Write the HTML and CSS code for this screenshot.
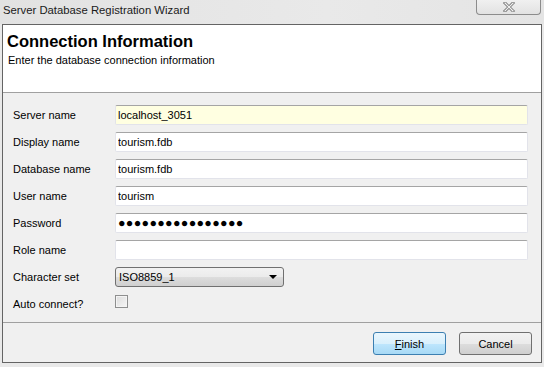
FILE: index.html
```html
<!DOCTYPE html>
<html lang="en">
<head>
  <meta charset="UTF-8" />
  <title>Server Database Registration Wizard</title>
  <link rel="stylesheet" href="styles.css">
</head>
<body>
  <div class="window">
    <div class="titlebar">
      <span class="title">Server Database Registration Wizard</span>
      <div class="close-btn">
        <svg width="14" height="10" viewBox="0 0 14 10">
          <path d="M3 1 L11 9 M11 1 L3 9" stroke="#7a7a7a" stroke-width="3" stroke-linecap="square" fill="none"/>
          <path d="M3 1 L11 9 M11 1 L3 9" stroke="#f4f4f4" stroke-width="1.2" stroke-linecap="square" fill="none"/>
        </svg>
      </div>
    </div>

    <div class="frame">
      <!-- Page header -->
      <div class="header">
        <h1>Connection Information</h1>
        <p>Enter the database connection information</p>
      </div>

      <!-- Connection fields -->
      <div class="form">
        <label class="lbl">Server name</label>
        <input class="field highlight" type="text" value="localhost_3051" />

        <label class="lbl">Display name</label>
        <input class="field" type="text" value="tourism.fdb" />

        <label class="lbl">Database name</label>
        <input class="field" type="text" value="tourism.fdb" />

        <label class="lbl">User name</label>
        <input class="field" type="text" value="tourism" />

        <label class="lbl">Password</label>
        <div class="field dots">●●●●●●●●●●●●●●●●</div>

        <label class="lbl">Role name</label>
        <input class="field" type="text" value="" />

        <label class="lbl">Character set</label>
        <div class="select">
          <span>ISO8859_1</span>
          <span class="arrow"></span>
        </div>

        <label class="lbl">Auto connect?</label>
        <div class="check-cell"><span class="checkbox"></span></div>
      </div>

      <div class="footer">
        <button class="btn default"><u>F</u>inish</button>
        <button class="btn">Cancel</button>
      </div>
    </div>
  </div>
</body>
</html>
```

FILE: styles.css
```css
body {
  margin: 0;
  background: #e9e9e9;
  font-family: 'Liberation Sans', Arial, sans-serif;
  font-size: 11px;
  color: #000;
}

.window {
  width: 544px;
  height: 367px;
  display: flex;
  flex-direction: column;
}

.titlebar {
  height: 24px;
  display: flex;
  justify-content: space-between;
  align-items: flex-start;
  background: linear-gradient(to right, #e2e2e2, #e9e9e9 60%, #e4e4e4);
}

.title {
  font-size: 11.3px;
  padding: 4px 0 0 3px;
  color: #1a1a1a;
}

.close-btn {
  width: 63px;
  height: 14px;
  margin-right: 3px;
  border: 1px solid #8c8c8c;
  border-top: none;
  border-radius: 0 0 4px 4px;
  background: linear-gradient(#f0f0f0, #e2e2e2);
  display: flex;
  justify-content: center;
  align-items: center;
}

.frame {
  margin: 0 2px 0 2px;
  border: 1px solid #646464;
  background: #f0f0f0;
  display: flex;
  flex-direction: column;
}

.header {
  background: #fff;
  height: 67px;
  border-bottom: 1px solid #a0a0a0;
  padding: 0 4px;
}

.header h1 {
  margin: 0;
  padding-top: 6px;
  font-size: 16.5px;
  font-weight: bold;
  line-height: 20px;
}

.header p {
  margin: 2px 0 0 1px;
  line-height: 14px;
}

.form {
  display: grid;
  grid-template-columns: 102px 413px;
  row-gap: 7px;
  padding: 12px 13px 8px 10px;
  border-bottom: 1px solid #a0a0a0;
}

.lbl {
  height: 20px;
  line-height: 20px;
}

.field {
  box-sizing: border-box;
  height: 20px;
  width: 413px;
  margin: 0;
  padding: 0 2px;
  border: 1px solid #e2e3ea;
  border-top-color: #a5a5a5;
  border-radius: 2px;
  background: #fff;
  font-family: inherit;
  font-size: 11px;
  outline: none;
}

.highlight {
  background: #ffffe1;
}

.dots {
  font-size: 12.5px;
  line-height: 18px;
  letter-spacing: 0.3px;
  padding-left: 2px;
}

.select {
  box-sizing: border-box;
  width: 169px;
  height: 20px;
  border: 1px solid #707070;
  border-radius: 3px;
  background: linear-gradient(#f2f2f2, #ebebeb 50%, #dddddd 51%, #cfcfcf);
  display: flex;
  justify-content: space-between;
  align-items: center;
  padding: 0 6px 0 3px;
}

.arrow {
  width: 0;
  height: 0;
  border-left: 4px solid transparent;
  border-right: 4px solid transparent;
  border-top: 4px solid #000;
}

.check-cell {
  height: 20px;
}

.checkbox {
  display: block;
  box-sizing: border-box;
  width: 13px;
  height: 13px;
  margin-top: 1px;
  border: 1px solid #8e8f8f;
  background: linear-gradient(135deg, #dcdcdc, #f6f6f6);
  box-shadow: inset 0 0 0 1px #f4f4f4;
}

.footer {
  height: 39px;
  display: flex;
  justify-content: flex-end;
  gap: 13px;
  padding: 9px 9px 0 0;
  box-sizing: border-box;
}

.btn {
  width: 73px;
  height: 23px;
  border: 1px solid #707070;
  border-radius: 3px;
  background: linear-gradient(#f2f2f2, #ebebeb 50%, #dddddd 51%, #cfcfcf);
  font-family: inherit;
  font-size: 11px;
  padding: 0;
}

.btn.default {
  border-color: #3c7fb1;
  background: linear-gradient(#eaf6fd, #d9f0fc 50%, #bee6fd 51%, #a7d9f5);
}
```
